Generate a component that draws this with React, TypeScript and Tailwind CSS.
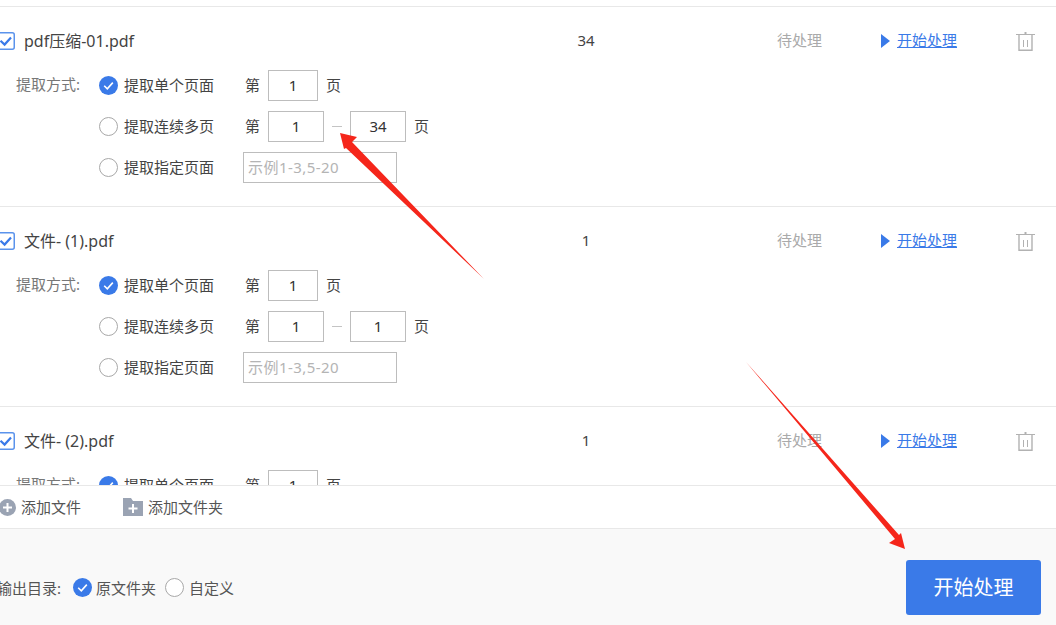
import React from "react";

const BLUE = "#3a7ae8";

function Radio({ on }: { on?: boolean }) {
  return on ? (
    <svg width="19" height="19" viewBox="0 0 19 19" className="shrink-0">
      <circle cx="9.5" cy="9.5" r="9.5" fill={BLUE} />
      <path d="M5.2 9.8 8.3 12.8 13.8 6.6" fill="none" stroke="#fff" strokeWidth="1.6" />
    </svg>
  ) : (
    <span className="block w-[19px] h-[19px] shrink-0 rounded-full border border-[#a8a8a8] bg-white" />
  );
}

function Box({ v, w, ph }: { v?: string; w: string; ph?: string }) {
  return (
    <span
      className={`flex h-[31px] ${w} items-center border border-[#bdbdbd] bg-white leading-[27px] ${
        ph ? "pl-[4px] tracking-[0.45px] text-[#b4b4b4]" : "justify-center text-[#333]"
      }`}
    >
      {v ?? ph}
    </span>
  );
}

function Row({ name, count, end }: { name: string; count: string; end: string }) {
  return (
    <div className="h-[200px] shrink-0 border-t border-[#e8e8e8] pt-[17px]">
      <div className="flex h-[34px] items-center">
        <svg width="18" height="18" viewBox="0 0 18 18" className="-ml-[3px] shrink-0">
          <rect x="0.75" y="0.75" width="16.5" height="16.5" rx="2" fill="#fff" stroke="#5b93ec" strokeWidth="1.5" />
          <path d="M3.5 8.8 7.6 12.6 14 5.6" fill="none" stroke={BLUE} strokeWidth="2.2" />
        </svg>
        <span className="ml-[9px] w-[512px] text-[16px] leading-[32px] text-[#444]">{name}</span>
        <span className="w-[100px] pb-[2px] text-center leading-[30px] text-[#444]">{count}</span>
        <span className="ml-[141px] w-[104px] pb-[2px] leading-[30px] text-[#aaa]">待处理</span>
        <svg width="9" height="14" viewBox="0 0 9 14" className="shrink-0">
          <path d="M0 0 9 7 0 14Z" fill={BLUE} />
        </svg>
        <span className="ml-[7px] w-[60px] pb-[2px] leading-[30px] text-[#3a7ae8] underline">开始处理</span>
        <svg width="19" height="19" viewBox="0 0 19 19" className="ml-[59px] shrink-0" fill="none" stroke="#b2b2b2">
          <path d="M0 2.5H19" strokeWidth="1" />
          <path d="M8.5 1H10.5" strokeWidth="2" />
          <path d="M3 3V18.2H16V3" strokeWidth="1.4" />
          <path d="M7.5 8V15M11.5 8V15" strokeWidth="1" />
        </svg>
      </div>
      <div className="mt-[7px] flex pl-[16px]">
        <span className="h-[41px] w-[83px] leading-[38px] text-[#777]">提取方式:</span>
        <div className="flex flex-col leading-[39px]">
          <div className="flex h-[41px] items-center">
            <Radio on />
            <span className="ml-[6px] w-[119px] text-[#444]">提取单个页面</span>
            <span className="ml-[2px] w-[23px] text-[#444]">第</span>
            <Box v="1" w="w-[50px]" />
            <span className="ml-[8px] text-[#444]">页</span>
          </div>
          <div className="flex h-[41px] items-center">
            <Radio />
            <span className="ml-[6px] w-[119px] text-[#444]">提取连续多页</span>
            <span className="ml-[2px] w-[23px] text-[#444]">第</span>
            <Box v="1" w="w-[56px]" />
            <span className="mx-[8px] block h-px w-[10px] bg-[#c4c4c4]" />
            <Box v={end} w="w-[56px]" />
            <span className="ml-[8px] text-[#444]">页</span>
          </div>
          <div className="flex h-[41px] items-center">
            <Radio />
            <span className="ml-[6px] w-[119px] text-[#444]">提取指定页面</span>
            <Box ph="示例1-3,5-20" w="w-[154px]" />
          </div>
        </div>
      </div>
    </div>
  );
}

export default function App() {
  return (
    <div className="relative flex h-[625px] w-[1056px] flex-col overflow-hidden bg-white font-['Noto_Sans','Noto_Sans_CJK_SC',sans-serif] text-[15px]">
      <div className="min-h-0 flex-1 overflow-hidden pt-[6px]">
        <Row name="pdf压缩-01.pdf" count="34" end="34" />
        <Row name="文件- (1).pdf" count="1" end="1" />
        <Row name="文件- (2).pdf" count="1" end="1" />
      </div>
      <div className="flex h-[44px] shrink-0 items-center border-y border-[#e8e8e8] bg-white text-[#555]">
        <svg width="17" height="17" viewBox="0 0 17 17" className="-ml-[1px] shrink-0">
          <circle cx="8.5" cy="8.5" r="8.5" fill="#9aa3b3" />
          <path d="M4 8.5H13M8.5 4V13" stroke="#fff" strokeWidth="2" />
        </svg>
        <span className="ml-[5px] w-[102px] leading-[40px]">添加文件</span>
        <svg width="20" height="18" viewBox="0 0 20 18" className="shrink-0">
          <path d="M0 0H8L10 3H20V18H0Z" fill="#9aa3b3" />
          <path d="M5.5 10.5H14.5M10 6V15" stroke="#fff" strokeWidth="2" />
        </svg>
        <span className="ml-[5px] leading-[40px]">添加文件夹</span>
      </div>
      <div className="flex h-[96px] shrink-0 items-center justify-between bg-[#f9f9f9] pl-0 pr-[15px] pt-[21px] text-[#555]">
        <div className="flex items-center leading-[40px]">
          <span className="-ml-[3px] w-[76px] whitespace-nowrap">输出目录:</span>
          <Radio on />
          <span className="ml-[4px] w-[69px]">原文件夹</span>
          <Radio />
          <span className="ml-[5px]">自定义</span>
        </div>
        <button className="h-[55px] w-[135px] rounded-[3px] bg-[#3a7ae8] text-[20px] text-white">开始处理</button>
      </div>
      <svg width="1056" height="625" viewBox="0 0 1056 625" className="pointer-events-none absolute left-0 top-0">
        <path d="M340 133 357 137 352 142 484 279 346 148 344 149Z" fill="#f5261b" />
        <path d="M905 549 889 543 895 539 746 362 899 535 901 533Z" fill="#f5261b" />
      </svg>
    </div>
  );
}
